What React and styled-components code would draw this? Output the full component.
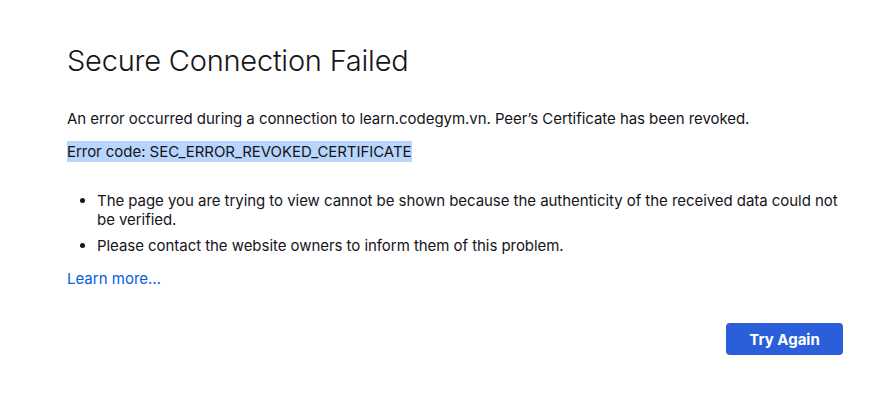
import React from "react";
import styled, { createGlobalStyle } from "styled-components";

const Global = createGlobalStyle`
  html, body { margin: 0; padding: 0; background: #fff; }
  body { font-family: Inter, "Noto Sans", sans-serif; color: #15141a; }
`;

const Page = styled.main`
  width: 880px;
  height: 402px;
  box-sizing: border-box;
  padding: 42px 37px 0 67px;
`;

const Title = styled.h1`
  margin: 0;
  font-size: 29px;
  font-weight: 300;
  line-height: 38px;
  letter-spacing: -0.22px;
  color: #15141a;
`;

const Para = styled.p`
  margin: ${(p) => p.$mt || 0}px 0 0;
  font-size: 15px;
  line-height: 20px;
  letter-spacing: -0.05px;
`;

const Highlight = styled.span`
  background: #b8d5fb;
  padding: 1px 0;
`;

const List = styled.ul`
  margin: 29px 0 0;
  padding: 0 0 0 30px;
  font-size: 15px;
  line-height: 19px;
  letter-spacing: -0.05px;
`;

const Item = styled.li`
  margin-bottom: 7px;
`;

const Link = styled.a`
  display: inline-block;
  margin-top: 7px;
  font-size: 15px;
  line-height: 20px;
  color: #0061e0;
  text-decoration: none;
`;

const Actions = styled.div`
  display: flex;
  justify-content: flex-end;
  margin-top: 34px;
`;

const Button = styled.button`
  width: 117px;
  height: 32px;
  border: none;
  border-radius: 4px;
  background: #2a5fd9;
  color: #fff;
  font-family: Inter, sans-serif;
  font-size: 15px;
  font-weight: 700;
  cursor: pointer;
`;

export default function App() {
  return (
    <Page>
      <Global />
      <Title>Secure Connection Failed</Title>
      <Para $mt={29}>
        An error occurred during a connection to learn.codegym.vn. Peer’s Certificate has been revoked.
      </Para>
      <Para $mt={13}>
        <Highlight>Error code: SEC_ERROR_REVOKED_CERTIFICATE</Highlight>
      </Para>
      <List>
        <Item>
          The page you are trying to view cannot be shown because the authenticity of the received data could not be verified.
        </Item>
        <Item>Please contact the website owners to inform them of this problem.</Item>
      </List>
      <Link href="#">Learn more…</Link>
      <Actions>
        <Button>Try Again</Button>
      </Actions>
    </Page>
  );
}
